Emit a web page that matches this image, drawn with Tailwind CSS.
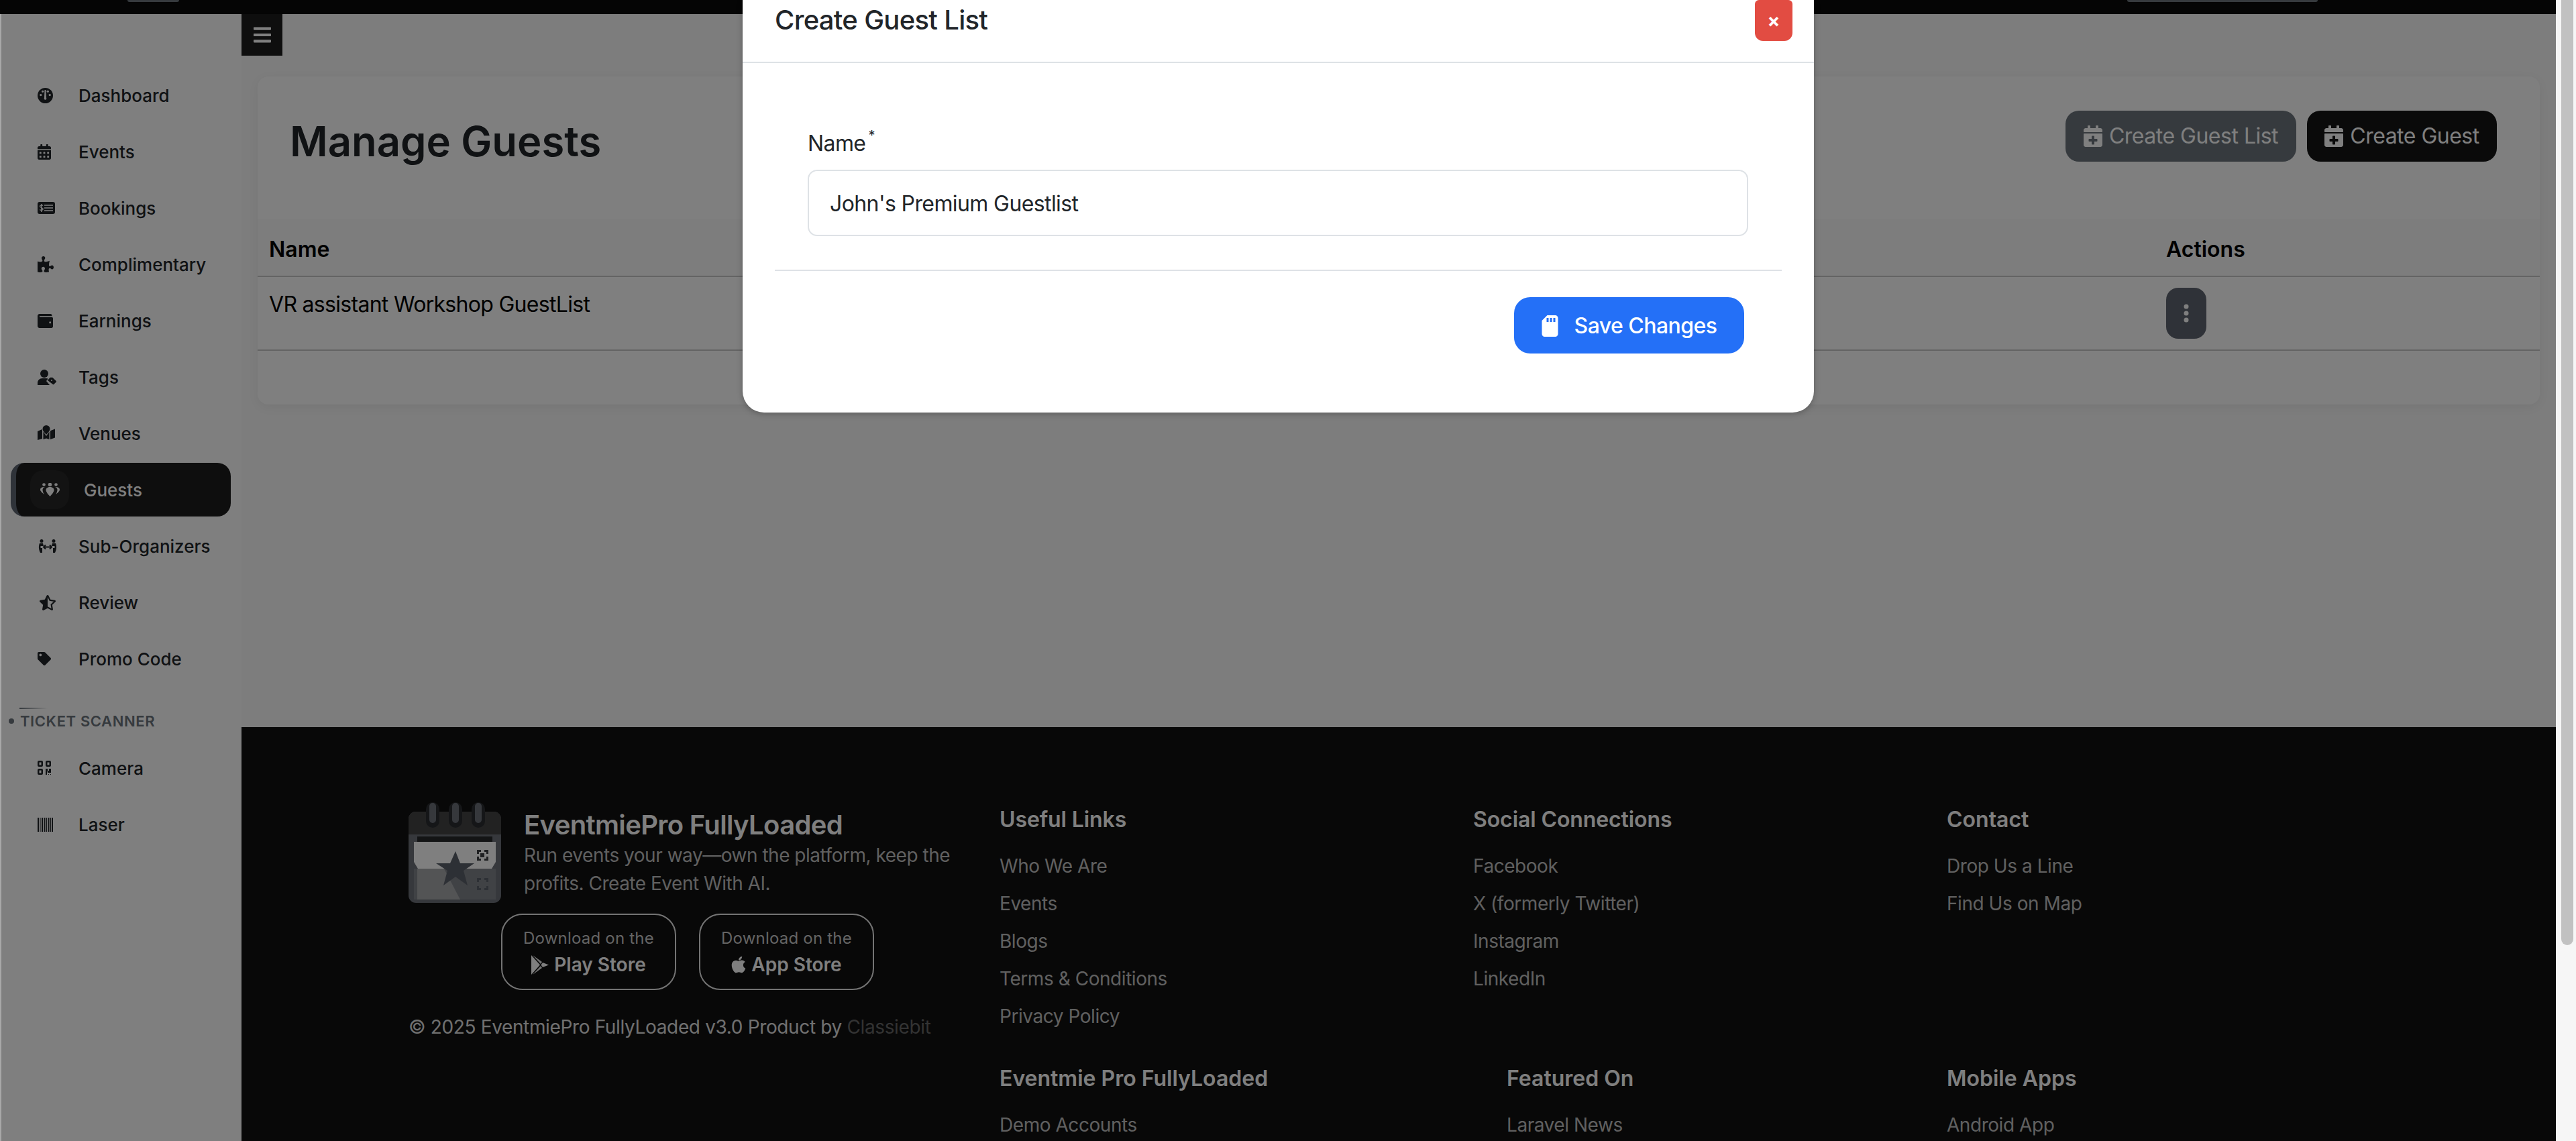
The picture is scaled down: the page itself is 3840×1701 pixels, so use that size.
<!DOCTYPE html>
<html lang="en">
<head>
<meta charset="utf-8">
<title>Manage Guests</title>
<script src="https://cdn.jsdelivr.net/npm/@tailwindcss/browser@4"></script>
</head>
<body class="w-[3840px] h-[1701px] overflow-hidden bg-white [font-family:Inter,sans-serif]">
<div class="flex h-[1701px] w-[3840px]">
  <div class="relative w-[3810px] h-[1701px] overflow-hidden flex flex-col bg-[#fafafa]">
    <div class="flex shrink-0 h-[21px] bg-[#0a0a0a]">
      <div class="ml-[190px] w-[77px] h-[3px] rounded-b-lg bg-[#6c757d]"></div>
      <div class="ml-auto mr-[355px] w-[284px] h-[3px] rounded-b-lg bg-[#6c757d]"></div>
    </div>
    <div class="flex flex-1 min-h-0">
      <aside class="w-[360px] shrink-0 bg-white pt-[79px] text-[#212529] text-[26px] font-medium">
        <a class="flex items-center h-[84px] pl-[56px]"><span class="w-[61px] shrink-0"><svg class="w-[23px] h-[23px]" viewBox="0 0 24 24"><circle cx="12" cy="12" r="12" fill="currentColor"/><circle cx="5" cy="11" r="1.7" fill="#fff"/><circle cx="8" cy="5.5" r="1.7" fill="#fff"/><circle cx="16" cy="5.5" r="1.7" fill="#fff"/><circle cx="19" cy="11" r="1.7" fill="#fff"/><path d="M11 3h2l.6 12.5a1.9 1.9 0 1 1-3.2 0z" fill="#fff"/></svg></span>Dashboard</a>
        <a class="flex items-center h-[84px] pl-[56px]"><span class="w-[61px] shrink-0"><svg class="w-[20px] h-[23px]" viewBox="0 0 448 512" fill="currentColor"><path d="M0 464c0 26.5 21.5 48 48 48h352c26.5 0 48-21.5 48-48V192H0v272zm320-196c0-6.6 5.4-12 12-12h40c6.6 0 12 5.4 12 12v40c0 6.6-5.4 12-12 12h-40c-6.6 0-12-5.4-12-12v-40zm0 128c0-6.6 5.4-12 12-12h40c6.6 0 12 5.4 12 12v40c0 6.6-5.4 12-12 12h-40c-6.6 0-12-5.4-12-12v-40zM192 268c0-6.6 5.4-12 12-12h40c6.6 0 12 5.4 12 12v40c0 6.6-5.4 12-12 12h-40c-6.6 0-12-5.4-12-12v-40zm0 128c0-6.6 5.4-12 12-12h40c6.6 0 12 5.4 12 12v40c0 6.6-5.4 12-12 12h-40c-6.6 0-12-5.4-12-12v-40zM64 268c0-6.6 5.4-12 12-12h40c6.6 0 12 5.4 12 12v40c0 6.6-5.4 12-12 12H76c-6.6 0-12-5.4-12-12v-40zm0 128c0-6.6 5.4-12 12-12h40c6.6 0 12 5.4 12 12v40c0 6.6-5.4 12-12 12H76c-6.6 0-12-5.4-12-12v-40zM400 64h-48V16c0-8.8-7.2-16-16-16h-32c-8.8 0-16 7.2-16 16v48H160V16c0-8.8-7.2-16-16-16h-32c-8.8 0-16 7.2-16 16v48H48C21.5 64 0 85.5 0 112v48h448v-48c0-26.5-21.5-48-48-48z"/></svg></span>Events</a>
        <a class="flex items-center h-[84px] pl-[56px]"><span class="w-[61px] shrink-0"><svg class="w-[26px] h-[18px]" viewBox="0 0 26 18"><rect width="26" height="18" rx="3" fill="currentColor"/><path d="M11 5h13M11 9h13M11 13h13" transform="translate(-1 0)" stroke="#fff" stroke-width="1.6"/><path d="M8 5.5C7.3 4.7 3.5 4.4 3.5 6.6c0 2.4 4.7 1.6 4.7 4 0 2.2-3.8 2-4.9 1M5.7 3v12" fill="none" stroke="#fff" stroke-width="1.3"/></svg></span>Bookings</a>
        <a class="flex items-center h-[84px] pl-[56px]"><span class="w-[61px] shrink-0"><svg class="w-[24px] h-[24px]" viewBox="0 0 576 512" preserveAspectRatio="none" fill="currentColor"><path d="M519.442 288.651c-41.519 0-59.5 31.593-82.058 31.593C377.409 320.244 432 144 432 144s-196.288 80-196.288-3.297c0-35.827 36.288-46.25 36.288-85.985C272 19.216 243.885 0 210.539 0c-34.654 0-66.366 18.891-66.366 56.346 0 41.364 31.711 59.277 31.711 81.75C175.885 207.719 0 166.758 0 166.758v333.237s178.635 41.047 178.635-28.662c0-22.473-40-40.107-40-81.471 0-37.456 29.25-56.346 63.577-56.346 33.673 0 61.788 19.216 61.788 54.717 0 39.735-36.288 50.158-36.288 85.985 0 60.803 129.675 25.73 181.23 25.73 0 0-34.725-120.101 25.827-120.101 35.962 0 46.423 36.152 86.308 36.152C556.712 416 576 387.99 576 354.443c0-34.199-18.962-65.792-56.558-65.792z"/></svg></span>Complimentary</a>
        <a class="flex items-center h-[84px] pl-[56px]"><span class="w-[61px] shrink-0"><svg class="w-[23px] h-[21px]" viewBox="0 32 512 448" preserveAspectRatio="none" fill="currentColor"><path d="M461.2 128H80c-8.84 0-16-7.16-16-16s7.16-16 16-16h384c8.84 0 16-7.16 16-16 0-26.51-21.49-48-48-48H64C28.65 32 0 60.65 0 96v320c0 35.35 28.65 64 64 64h397.2c28.02 0 50.8-21.53 50.8-48V176c0-26.47-22.78-48-50.8-48zM416 336c-17.67 0-32-14.33-32-32s14.33-32 32-32 32 14.33 32 32-14.33 32-32 32z"/></svg></span>Earnings</a>
        <a class="flex items-center h-[84px] pl-[56px]"><span class="w-[61px] shrink-0"><svg class="w-[28px] h-[23px]" viewBox="0 0 28 23" fill="currentColor"><circle cx="10" cy="6" r="6"/><path d="M0 23v-3c0-4 3-7 7-7h6c1 0 2 .2 2.8.6L13 17l5 6z"/><path d="M15 16l3.5-4a1 1 0 0 1 .8-.3h3l5.4 5.3a1 1 0 0 1 0 1.4l-3.5 3.6a1 1 0 0 1-1.4 0z"/><circle cx="21" cy="16" r="1" fill="#fff"/></svg></span>Tags</a>
        <a class="flex items-center h-[84px] pl-[56px]"><span class="w-[61px] shrink-0"><svg class="w-[26px] h-[22px] -mt-[3px]" viewBox="0 0 26 22" fill="currentColor"><path d="M7.500 5.500a5.500 5.500 0 0 1 11 0c0 3-3.500 6-5.500 8.500-2-2.500-5.500-5.500-5.500-8.500z"/><path d="M0 9l6.500-3 .5 2v12L0 22zM26 5.500l-6.500 2.500-.5 1v12l7-2.500zM8.500 9.500l4.500 6.500 4.500-6.500v11.500l-4.500-1.500-4.500 1.500z"/></svg></span>Venues</a>
        <div class="h-[84px] py-[2px] pl-[16px] pr-[16px]">
          <a class="flex items-center h-[80px] rounded-[20px] border-l-[8px] border-[#5f6672] bg-[#1c1c1c] text-white">
            <span class="flex items-center justify-center w-[58px] h-[58px] ml-[21px] mr-[22px] rounded-[20px] bg-[#262626]"><svg class="w-[29px] h-[20px]" viewBox="0 0 29 20" fill="currentColor"><circle cx="5.500" cy="2.500" r="2.300"/><circle cx="14.500" cy="2.500" r="2.800"/><circle cx="23.500" cy="2.500" r="2.300"/><path d="M8.500 10.500c0-3 3-4.500 6-4.500s6 1.500 6 4.500c0 3-4 7.500-6 9.500-2-2-6-6.500-6-9.500z"/><path d="M6.800 6C4 6 0 6.500 0 10c0 2 3 5 6 7-1.500-2-2.500-4.500-2.500-7 0-1.500 1.300-3 3.300-4zM22.200 6C25 6 29 6.500 29 10c0 2-3 5-6 7 1.500-2 2.500-4.500 2.500-7 0-1.500-1.300-3-3.300-4z"/></svg></span>Guests</a>
        </div>
        <a class="flex items-center h-[84px] pl-[56px]"><span class="w-[61px] shrink-0"><svg class="w-[28px] h-[20px] ml-[1px]" viewBox="0 0 28 20" fill="currentColor"><circle cx="5" cy="2.500" r="2.500"/><circle cx="23" cy="2.500" r="2.500"/><path d="M2 6h5l1 4H3.500v3H6v7H3c-2-4-3-9-1-14zM26 6h-5l-1 4h4.500v3H22v7h3c2-4 3-9 1-14z"/><path d="M9 11.500h10M11 8.500l-3 3 3 3M17 8.500l3 3-3 3" fill="none" stroke="currentColor" stroke-width="2"/></svg></span>Sub-Organizers</a>
        <a class="flex items-center h-[84px] pl-[56px]"><span class="w-[61px] shrink-0"><svg class="w-[24px] h-[23px] ml-[3px]" viewBox="0 0 536 512" fill="currentColor"><path d="M508.55 171.51L362.18 150.2 296.77 17.81C290.89 5.98 279.42 0 267.95 0c-11.4 0-22.79 5.9-28.69 17.81l-65.43 132.38-146.38 21.29c-26.25 3.8-36.77 36.09-17.74 54.59l105.89 103-25.06 145.48C86.98 495.33 103.57 512 122.15 512c4.93 0 10-1.17 14.87-3.75l130.95-68.68 130.94 68.7c4.86 2.55 9.92 3.71 14.83 3.71 18.6 0 35.22-16.61 31.66-37.4l-25.03-145.49 105.91-102.98c19.04-18.5 8.52-50.8-17.73-54.6zm-121.74 123.2l-18.12 17.62 4.28 24.88 19.52 113.45-102.13-53.59-22.38-11.74.03-317.19 51.03 103.29 11.18 22.63 25.01 3.64 114.23 16.63-82.65 80.38z"/></svg></span>Review</a>
        <a class="flex items-center h-[84px] pl-[56px]"><span class="w-[61px] shrink-0"><svg class="w-[20px] h-[20px]" viewBox="0 0 512 512" fill="currentColor"><path d="M0 252.118V48C0 21.49 21.49 0 48 0h204.118a48 48 0 0 1 33.941 14.059l211.882 211.882c18.745 18.745 18.745 49.137 0 67.882L293.823 497.941c-18.745 18.745-49.137 18.745-67.882 0L14.059 286.059A48 48 0 0 1 0 252.118zM112 64c-26.51 0-48 21.49-48 48s21.49 48 48 48 48-21.49 48-48-21.49-48-48-48z"/></svg></span>Promo Code</a>
        <div class="h-[79px] pt-[31px] pl-[13px]">
          <div class="w-[42px] h-[2px] ml-[16px] bg-gradient-to-r from-[#6c757d] to-transparent"></div>
          <div class="flex items-center h-[34px] mt-[1px] text-[22px] font-semibold text-[#6c757d] uppercase leading-none tracking-[0.6px]"><span class="w-[8px] h-[8px] rounded-full bg-[#6c757d] mr-[9px]"></span>Ticket Scanner</div>
        </div>
        <a class="flex items-center h-[84px] pl-[56px]"><span class="w-[61px] shrink-0"><svg class="w-[20px] h-[23px]" viewBox="0 0 20 23" fill="currentColor" fill-rule="evenodd"><path d="M0 2a2 2 0 0 1 2-2h4a2 2 0 0 1 2 2v5a2 2 0 0 1-2 2H2a2 2 0 0 1-2-2zm2.500.500v4h3v-4zM12 2a2 2 0 0 1 2-2h4a2 2 0 0 1 2 2v5a2 2 0 0 1-2 2h-4a2 2 0 0 1-2-2zm2.500.500v4h3v-4zM0 14a2 2 0 0 1 2-2h4a2 2 0 0 1 2 2v5a2 2 0 0 1-2 2H2a2 2 0 0 1-2-2zm2.500.500v4h3v-4zM12 12h3v3h2v-3h3v6h-5v-2h-1v5h-2zM16 20h1v1h-1zM19 20h1v1h-1z"/></svg></span>Camera</a>
        <a class="flex items-center h-[84px] pl-[56px]"><span class="w-[61px] shrink-0"><svg class="w-[23px] h-[21px]" viewBox="0 0 23 21" fill="currentColor"><path d="M0 0h2v21H0zM3.500 0h1v21h-1zM6 0h2v21H6zM9.500 0h2v21h-2zM13 0h1v21h-1zM15.500 0h2v21h-2zM19 0h1v21h-1zM21 0h2v21h-2z"/></svg></span>Laser</a>
      </aside>
      <div class="flex-1 min-w-0 flex flex-col">
        <main class="h-[1063px] shrink-0">
          <button class="flex items-center justify-center w-[61px] h-[62px] bg-[#1c1c1c] text-white"><svg class="w-[26px] h-[30px]" viewBox="0 0 448 512" preserveAspectRatio="none" fill="currentColor"><path d="M16 132h416c8.837 0 16-7.163 16-16V76c0-8.837-7.163-16-16-16H16C7.163 60 0 67.163 0 76v40c0 8.837 7.163 16 16 16zm0 160h416c8.837 0 16-7.163 16-16v-40c0-8.837-7.163-16-16-16H16c-8.837 0-16 7.163-16 16v40c0 8.837 7.163 16 16 16zm0 160h416c8.837 0 16-7.163 16-16v-40c0-8.837-7.163-16-16-16H16c-8.837 0-16 7.163-16 16v40c0 8.837 7.163 16 16 16z"/></svg></button>
          <section class="mt-[31px] mx-[24px] h-[489px] rounded-[16px] bg-white shadow-[0_4px_16px_rgba(0,0,0,0.06)] overflow-hidden">
            <div class="flex items-center justify-between h-[212px] pl-[48px] pr-[64px] pb-[18px]">
              <h1 class="text-[61.5px] font-semibold text-[#212529] leading-none -mt-[1px]">Manage Guests</h1>
              <div class="flex gap-[16px] text-[32px] text-white tracking-[-0.5px] mb-[16px]">
                <button class="flex items-center gap-[10px] h-[76px] w-[344px] justify-center rounded-[20px] bg-[#6c757d]"><svg class="w-[28px] h-[32px]" viewBox="0 0 448 512" fill="currentColor"><path d="M436 160H12c-6.6 0-12-5.4-12-12v-36c0-26.5 21.5-48 48-48h48V12c0-6.6 5.4-12 12-12h40c6.6 0 12 5.4 12 12v52h128V12c0-6.6 5.4-12 12-12h40c6.6 0 12 5.4 12 12v52h48c26.5 0 48 21.5 48 48v36c0 6.6-5.4 12-12 12zM12 192h424c6.6 0 12 5.4 12 12v260c0 26.5-21.5 48-48 48H48c-26.5 0-48-21.5-48-48V204c0-6.6 5.4-12 12-12zm316 140c0-6.6-5.4-12-12-12h-60v-60c0-6.6-5.4-12-12-12h-40c-6.6 0-12 5.4-12 12v60h-60c-6.6 0-12 5.4-12 12v40c0 6.6 5.4 12 12 12h60v60c0 6.6 5.4 12 12 12h40c6.6 0 12-5.4 12-12v-60h60c6.6 0 12-5.4 12-12v-40z"/></svg>Create Guest List</button>
                <button class="flex items-center gap-[10px] h-[76px] w-[283px] justify-center rounded-[20px] bg-[#141414]"><svg class="w-[28px] h-[32px]" viewBox="0 0 448 512" fill="currentColor"><path d="M436 160H12c-6.6 0-12-5.4-12-12v-36c0-26.5 21.5-48 48-48h48V12c0-6.6 5.4-12 12-12h40c6.6 0 12 5.4 12 12v52h128V12c0-6.6 5.4-12 12-12h40c6.6 0 12 5.4 12 12v52h48c26.5 0 48 21.5 48 48v36c0 6.6-5.4 12-12 12zM12 192h424c6.6 0 12 5.4 12 12v260c0 26.5-21.5 48-48 48H48c-26.5 0-48-21.5-48-48V204c0-6.6 5.4-12 12-12zm316 140c0-6.6-5.4-12-12-12h-60v-60c0-6.6-5.4-12-12-12h-40c-6.6 0-12 5.4-12 12v60h-60c-6.6 0-12 5.4-12 12v40c0 6.6 5.4 12 12 12h60v60c0 6.6 5.4 12 12 12h40c6.6 0 12-5.4 12-12v-60h60c6.6 0 12-5.4 12-12v-40z"/></svg>Create Guest</button>
              </div>
            </div>
            <div class="flex items-center justify-between h-[87px] pl-[17px] pt-[7px] border-b-2 border-[#c8c8c8] bg-[#fbfbfb] text-[32px] font-semibold text-black">
              <span>Name</span><span class="w-[557px]">Actions</span>
            </div>
            <div class="flex justify-between h-[110px] pl-[17px] border-b-2 border-[#c8c8c8] text-[32px] text-black">
              <span class="pt-[21px] leading-[40px] tracking-[-0.7px]">VR assistant Workshop GuestList</span>
              <span class="w-[557px] pt-[16px]"><button class="flex items-center justify-center w-[60px] h-[76px] rounded-[18px] bg-[#5f6570] text-white"><svg class="w-[8px] h-[28px]" viewBox="0 0 8 28" fill="currentColor"><circle cx="4" cy="4" r="3.500"/><circle cx="4" cy="14" r="3.500"/><circle cx="4" cy="24" r="3.500"/></svg></button></span>
            </div>
          </section>
        </main>
        <footer class="flex-1 min-h-0 overflow-hidden bg-[#101010] pt-[112px] pl-[249px] flex">
          <div class="w-[881px] shrink-0">
            <div class="flex gap-[34px]">
              <svg class="w-[138px] h-[150px] shrink-0" viewBox="0 0 138 150">
                <rect y="14" width="138" height="136" rx="11" fill="#6c7079"/>
                <path d="M0 48V25a11 11 0 0 1 11-11h116a11 11 0 0 1 11 11v23z" fill="#444"/>
                <rect x="26" y="0" width="20" height="38" rx="10" fill="#2a2c30"/><rect x="60" y="0" width="20" height="38" rx="10" fill="#2a2c30"/><rect x="94" y="0" width="20" height="38" rx="10" fill="#2a2c30"/>
                <rect x="31" y="1" width="10" height="30" rx="5" fill="#6c7079"/><rect x="65" y="1" width="10" height="30" rx="5" fill="#6c7079"/><rect x="99" y="1" width="10" height="30" rx="5" fill="#6c7079"/>
                <path d="M13 51h100l12 0v8H13z" fill="#26282b"/>
                <path d="M8 59h122v30l-6 10H14L8 89z" fill="#fff"/>
                <path d="M8 99h122v46H8z" fill="#80848a"/>
                <path d="M13 99h40l24 46H13z" fill="#a6a8ab"/>
                <path d="M70 73l7 18 21 0-16 11 6 22-18-13-18 13 6-22-17-11 21 0z" fill="#5b606a"/>
                <path d="M102 71h6v3h-3v3h-3zM113 71h6v6h-3v-3h-3zM102 81h3v3h3v3h-6zM116 81h3v6h-6v-3h3zM107 76h6v6h-6z" fill="#3e4044"/>
                <path d="M102 113h6v3h-3v3h-3zM113 113h6v6h-3v-3h-3zM102 125h3v3h3v3h-6zM116 125h3v6h-6v-3h3z" fill="#5b606a"/>
              </svg>
              <div class="pt-[10px]">
                <div class="text-[40px] leading-[48px] font-semibold text-white tracking-[-0.65px]">EventmiePro FullyLoaded</div>
                <p class="w-[660px] text-[28px] leading-[42px] text-[#c0c0c0] tracking-[-0.48px]">Run events your way—own the platform, keep the profits. Create Event With AI.</p>
              </div>
            </div>
            <div class="flex gap-[34px] ml-[138px] mt-[16px]">
              <a class="flex flex-col items-center justify-center w-[261px] h-[114px] rounded-[32px] border-2 border-[#e8e8e8] text-[#c8c8c8]">
                <span class="text-[24px] leading-[38px] tracking-[0.2px]">Download on the</span>
                <span class="flex items-center gap-[8px] text-[28px] leading-[40px] font-semibold text-white"><svg class="w-[26px] h-[29px]" viewBox="0 0 26 29" fill="currentColor"><path d="M0 0l13 14.500L0 29z"/><path d="M2 0l14 10-2 3zM2 29l14-10-2-3z" opacity=".9"/><path d="M17 11l9 3.500-9 3.500-2.500-3.500z"/></svg>Play Store</span>
              </a>
              <a class="flex flex-col items-center justify-center w-[261px] h-[114px] rounded-[32px] border-2 border-[#e8e8e8] text-[#c8c8c8]">
                <span class="text-[24px] leading-[38px] tracking-[0.2px]">Download on the</span>
                <span class="flex items-center gap-[8px] text-[28px] leading-[40px] font-semibold text-white"><svg class="w-[22px] h-[28px]" viewBox="0 0 384 512" fill="currentColor"><path d="M318.7 268.7c-.2-36.7 16.4-64.4 50-84.8-18.8-26.9-47.2-41.7-84.7-44.6-35.5-2.8-74.3 20.7-88.5 20.7-15 0-49.4-19.7-76.4-19.7C63.3 141.2 4 184.8 4 273.5q0 39.3 14.4 81.2c12.8 36.7 59 126.7 107.2 125.2 25.2-.6 43-17.9 75.8-17.9 31.8 0 48.3 17.9 76.4 17.9 48.6-.7 90.4-82.5 102.6-119.3-65.2-30.7-61.7-90-61.7-91.9zm-56.6-164.2c27.3-32.4 24.8-61.9 24-72.5-24.1 1.4-52 16.4-67.9 34.9-17.5 19.8-27.8 44.3-25.6 71.9 26.1 2 49.9-11.4 69.5-34.3z"/></svg>App Store</span>
              </a>
            </div>
            <div class="mt-[34px] text-[28px] leading-[42px] text-[#e0e0e0] tracking-[-0.36px]">© 2025 EventmiePro FullyLoaded v3.0 Product by <span class="text-[#666]">Classiebit</span></div>
          </div>
          <div class="w-[1412px] shrink-0 mt-[2px]">
            <div class="flex">
              <div class="w-[706px]">
                <h4 class="text-[32px] leading-[48px] font-semibold text-white tracking-[-0.1px]">Useful Links</h4>
                <ul class="mt-[17px] text-[28px] leading-[56px] text-[#c0c0c0] tracking-[-0.45px]"><li>Who We Are</li><li>Events</li><li>Blogs</li><li>Terms &amp; Conditions</li><li>Privacy Policy</li></ul>
              </div>
              <div class="w-[706px]">
                <h4 class="text-[32px] leading-[48px] font-semibold text-white tracking-[-0.1px]">Social Connections</h4>
                <ul class="mt-[17px] text-[28px] leading-[56px] text-[#c0c0c0] tracking-[-0.45px]"><li>Facebook</li><li>X (formerly Twitter)</li><li>Instagram</li><li>LinkedIn</li></ul>
              </div>
            </div>
            <div class="flex mt-[41px]">
              <div class="w-[756px]">
                <h4 class="text-[32px] leading-[48px] font-semibold text-white">Eventmie Pro FullyLoaded</h4>
                <ul class="mt-[17px] text-[28px] leading-[56px] text-[#c0c0c0] tracking-[-0.45px]"><li>Demo Accounts</li></ul>
              </div>
              <div class="w-[656px]">
                <h4 class="text-[32px] leading-[48px] font-semibold text-white">Featured On</h4>
                <ul class="mt-[17px] text-[28px] leading-[56px] text-[#c0c0c0] tracking-[-0.45px]"><li>Laravel News</li></ul>
              </div>
            </div>
          </div>
          <div class="mt-[2px]">
            <h4 class="text-[32px] leading-[48px] font-semibold text-white">Contact</h4>
            <ul class="mt-[17px] text-[28px] leading-[56px] text-[#c0c0c0] tracking-[-0.45px]"><li>Drop Us a Line</li><li>Find Us on Map</li></ul>
            <h4 class="mt-[209px] text-[32px] leading-[48px] font-semibold text-white">Mobile Apps</h4>
            <ul class="mt-[17px] text-[28px] leading-[56px] text-[#c0c0c0] tracking-[-0.45px]"><li>Android App</li></ul>
          </div>
        </footer>
      </div>
    </div>
    <div class="absolute inset-0 bg-black/50"></div>
    <div class="absolute left-0 top-[21px] bottom-0 w-[2px] bg-[#a8a8a8]"></div>
    <div class="absolute top-0 left-[1107px] w-[1597px] h-[615px] bg-white rounded-b-[32px] shadow-[0_2px_10px_rgba(0,0,0,0.25)] text-[#212529]">
      <div class="flex justify-between h-[94px] pl-[48px] pr-[32px] border-b-2 border-[#dee2e6]">
        <h5 class="text-[40px] font-medium leading-[60px] tracking-[-0.7px]">Create Guest List</h5>
        <button class="flex items-center justify-center w-[56px] h-[61px] rounded-b-[12px] rounded-t-[6px] bg-[#e24c42] text-white text-[28px] font-bold">×</button>
      </div>
      <div class="pt-[96px] px-[97px] pr-[98px]">
        <label class="flex text-[32px] leading-[48px] mb-[15px] tracking-[-0.6px]">Name<span class="text-[20px] leading-[24px] ml-[4px]">*</span></label>
        <div class="flex items-center h-[99px] pl-[31px] pt-[3px] border-2 border-[#dee2e6] rounded-[14px] text-[32px] tracking-[-0.6px]">John's Premium Guestlist</div>
      </div>
      <div class="mt-[50px] mx-[48px] h-[2px] bg-[#dee2e6]"></div>
      <div class="flex justify-end mt-[39px] pr-[104px]">
        <button class="flex items-center justify-center gap-[24px] w-[343px] h-[84px] rounded-[24px] bg-[#2470f7] text-white text-[32px] font-medium tracking-[-0.55px] pt-[1px]"><svg class="w-[25px] h-[32px]" viewBox="0 0 384 512" fill="currentColor"><path d="M320 0H128L0 128v320c0 35.3 28.7 64 64 64h256c35.3 0 64-28.7 64-64V64c0-35.3-28.7-64-64-64zM160 160h-48V64h48v96zm80 0h-48V64h48v96zm80 0h-48V64h48v96z"/></svg>Save Changes</button>
      </div>
    </div>
  </div>
  <div class="w-[30px] h-[1701px] bg-[#f6f6f6] pl-[8px] pr-[4px]">
    <div class="h-[1409px] rounded-b-[9px] bg-[#c1c1c1]"></div>
  </div>
</div>
</body>
</html>
